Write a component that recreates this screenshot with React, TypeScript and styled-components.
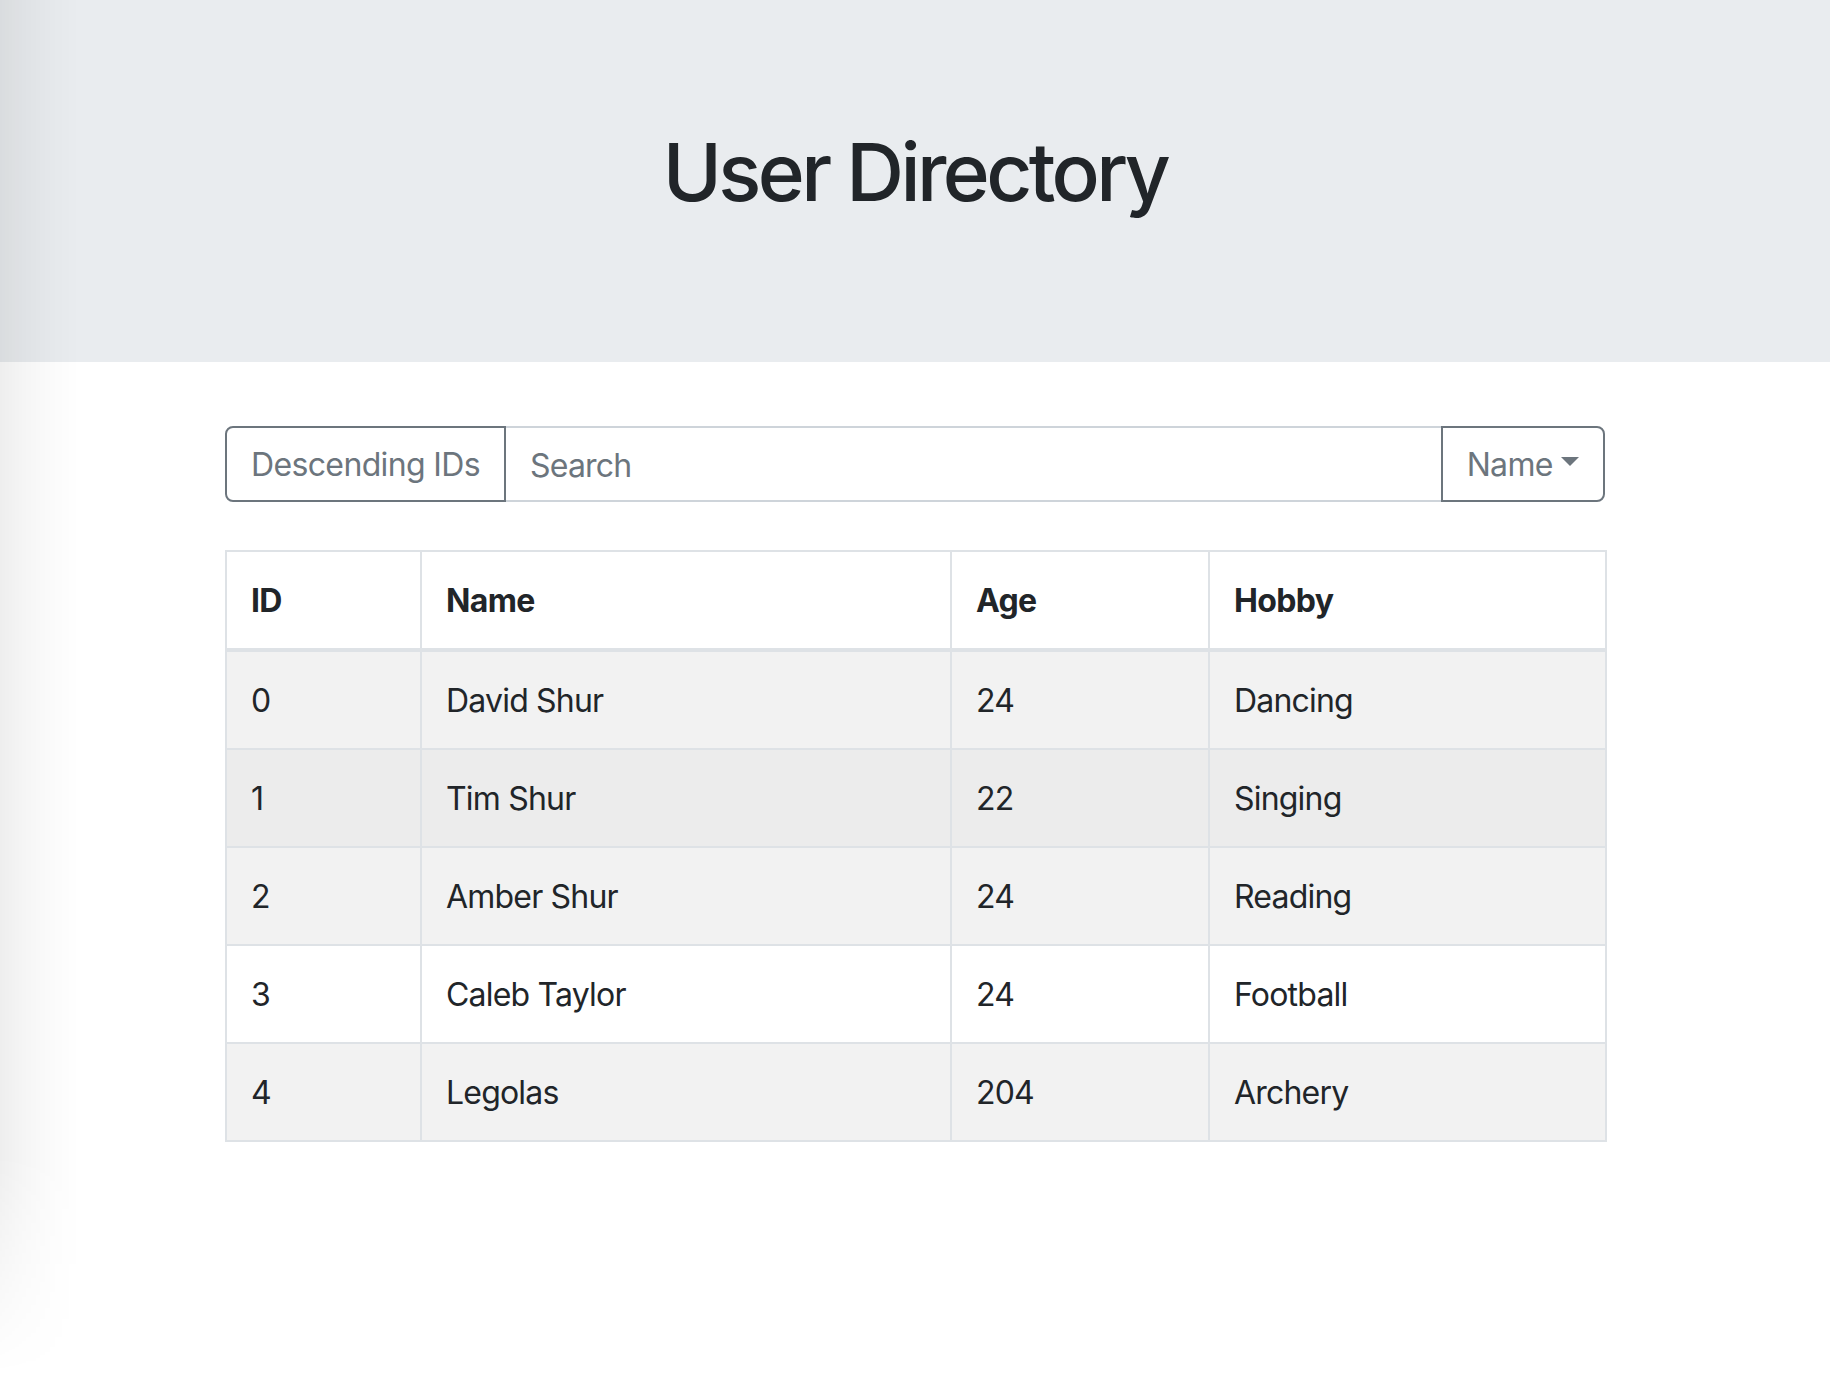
import styled, { createGlobalStyle } from "styled-components";

const GlobalStyle = createGlobalStyle`
  html, body {
    margin: 0;
    padding: 0;
    background: #fff;
  }
  body {
    font-family: Inter, "Noto Sans", "Liberation Sans", sans-serif;
    font-size: 32px;
    line-height: 1.5;
    color: #212529;
  }
  * {
    box-sizing: border-box;
  }
`;

const Page = styled.div`
  position: relative;
  min-height: 1374px;
`;

// soft shadow that sits over the left edge of the window
const EdgeShadow = styled.div`
  position: fixed;
  top: 0;
  left: 0;
  width: 80px;
  height: 100vh;
  pointer-events: none;
  background: linear-gradient(
    to right,
    rgba(0, 0, 0, 0.065) 0%,
    rgba(0, 0, 0, 0.04) 30%,
    rgba(0, 0, 0, 0.015) 65%,
    rgba(0, 0, 0, 0) 100%
  );
  -webkit-mask-image: linear-gradient(to bottom, #000 84%, transparent 100%);
  mask-image: linear-gradient(to bottom, #000 84%, transparent 100%);
`;

const Jumbotron = styled.header`
  background: #e9ecef;
  padding: 124px 0 126px;
  margin-bottom: 64px;
  text-align: center;
`;

const Title = styled.h1`
  margin: 0 0 16px;
  font-size: 80px;
  font-weight: 500;
  line-height: 1.2;
  letter-spacing: -0.045em;
  color: #212529;
`;

const Container = styled.main`
  max-width: 1440px;
  margin: 0 auto;
  padding: 0 30px;
`;

const SearchGroup = styled.div`
  display: flex;
  align-items: stretch;
  margin-bottom: 48px;
`;

const OutlineButton = styled.button<{ $side: "left" | "right" }>`
  position: relative;
  z-index: 2;
  flex: none;
  display: inline-flex;
  align-items: center;
  padding: 13px 24px 11px;
  font-family: inherit;
  font-size: 32px;
  line-height: 1.5;
  letter-spacing: -0.02em;
  color: #6c757d;
  background: transparent;
  border: 2px solid #6c757d;
  border-radius: ${(p) => (p.$side === "left" ? "8px 0 0 8px" : "0 8px 8px 0")};
  margin-left: ${(p) => (p.$side === "right" ? "-2px" : "0")};
  cursor: pointer;
`;

const Caret = styled.span`
  display: inline-block;
  margin-left: 0.255em;
  margin-top: -0.2em;
  border-top: 0.3em solid;
  border-right: 0.3em solid transparent;
  border-left: 0.3em solid transparent;
  border-bottom: 0;
`;

const SearchInput = styled.input`
  flex: 1 1 auto;
  min-width: 0;
  margin-left: -2px;
  padding: 13px 24px 11px 24px;
  height: 76px;
  font-family: inherit;
  font-size: 32px;
  line-height: 1.5;
  letter-spacing: -0.025em;
  color: #495057;
  background: #fff;
  border: 2px solid #ced4da;
  border-radius: 0;
  outline: none;

  &::placeholder {
    color: #6c757d;
  }
`;

const Table = styled.table`
  width: 100%;
  border-collapse: collapse;
  table-layout: fixed;
  color: #212529;
  border: 2px solid #dee2e6;
`;

const HeadCell = styled.th<{ $width: number }>`
  width: ${(p) => p.$width}px;
  padding: 25px 24px 23px;
  text-align: left;
  vertical-align: bottom;
  font-weight: 700;
  letter-spacing: -0.02em;
  border: 2px solid #dee2e6;
  border-bottom-width: 4px;
`;

const Row = styled.tr<{ $tone: "plain" | "striped" | "hover" }>`
  background: ${(p) =>
    p.$tone === "striped" ? "#f2f2f2" : p.$tone === "hover" ? "#ececec" : "#fff"};
`;

const Cell = styled.td`
  padding: 25px 24px 23px;
  vertical-align: top;
  letter-spacing: -0.025em;
  border: 2px solid #dee2e6;
`;

const columns = [
  { label: "ID", width: 195 },
  { label: "Name", width: 530 },
  { label: "Age", width: 258 },
  { label: "Hobby", width: 397 },
];

const users = [
  { id: 0, name: "David Shur", age: 24, hobby: "Dancing" },
  { id: 1, name: "Tim Shur", age: 22, hobby: "Singing" },
  { id: 2, name: "Amber Shur", age: 24, hobby: "Reading" },
  { id: 3, name: "Caleb Taylor", age: 24, hobby: "Football" },
  { id: 4, name: "Legolas", age: 204, hobby: "Archery" },
];

const hoveredRow = 1;

function App() {
  return (
    <Page>
      <GlobalStyle />
      <Jumbotron>
        <Title>User Directory</Title>
      </Jumbotron>
      <Container>
        <SearchGroup>
          <OutlineButton $side="left">Descending IDs</OutlineButton>
          <SearchInput type="text" placeholder="Search" />
          <OutlineButton $side="right">
            Name
            <Caret />
          </OutlineButton>
        </SearchGroup>
        <Table>
          <thead>
            <tr>
              {columns.map((col) => (
                <HeadCell key={col.label} $width={col.width}>
                  {col.label}
                </HeadCell>
              ))}
            </tr>
          </thead>
          <tbody>
            {users.map((user, index) => (
              <Row
                key={user.id}
                $tone={
                  index === hoveredRow ? "hover" : index % 2 === 0 ? "striped" : "plain"
                }
              >
                <Cell>{user.id}</Cell>
                <Cell>{user.name}</Cell>
                <Cell>{user.age}</Cell>
                <Cell>{user.hobby}</Cell>
              </Row>
            ))}
          </tbody>
        </Table>
      </Container>
      <EdgeShadow />
    </Page>
  );
}

export default App;
